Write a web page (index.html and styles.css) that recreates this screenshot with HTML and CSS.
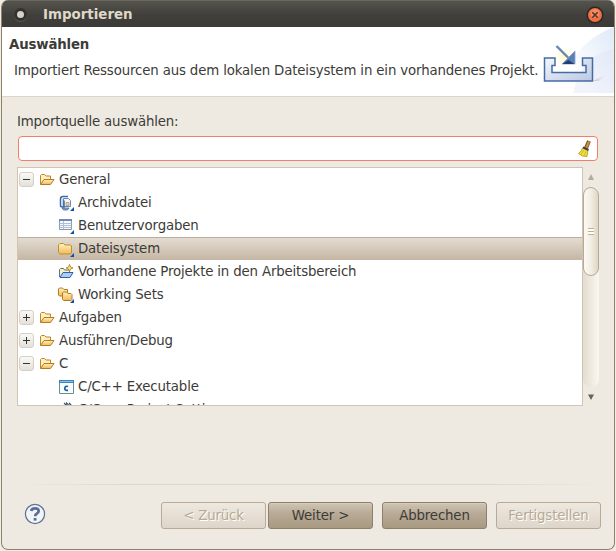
FILE: index.html
```html
<!DOCTYPE html>
<html lang="de">
<head>
<meta charset="utf-8">
<title>Importieren</title>
<link rel="stylesheet" href="styles.css">
</head>
<body>
<svg class="defs" width="0" height="0">
  <defs>
    <linearGradient id="gold" x1="0" y1="0" x2="0" y2="1"><stop offset="0" stop-color="#fff2c0"/><stop offset="1" stop-color="#f0ba58"/></linearGradient>
    <linearGradient id="steel" x1="0" y1="0" x2="1" y2="1"><stop offset="0" stop-color="#f4f7fc"/><stop offset="1" stop-color="#b9c8e2"/></linearGradient>
    <symbol id="folder-open" viewBox="0 0 16 16">
      <path d="M1.500 12V3.500L2.500 2.500H5.500L7 4H11.500V7.500" fill="#fff0bd" stroke="#c08431"/>
      <path d="M1.500 12.500L5 7.500H15L11.500 12.500Z" fill="url(#gold)" stroke="#b87921"/>
    </symbol>
    <symbol id="corner" viewBox="0 0 16 16"><path d="M16 12V16H12Z" fill="#0c539b"/></symbol>
    <symbol id="folder" viewBox="0 0 16 16">
      <path d="M.5 11.500V4L2 2.500H5.500L7 4H12.500L13.500 5V11.500L12.500 13H2Z" fill="url(#gold)" stroke="#c58b2e"/>
      <use href="#corner"/>
    </symbol>
  </defs>
</svg>
<div class="window">
  <header class="titlebar">
    <span class="menu-dot"></span>
    <span class="title">Importieren</span>
    <svg class="close" viewBox="0 0 18 18"><circle cx="9" cy="9" r="8.500" fill="#292825"/><circle cx="9" cy="9" r="7" fill="#ef7044"/><circle cx="9" cy="7.500" r="4.500" fill="#f68a60"/><path d="M6.300 6.300L11.700 11.700M11.700 6.300L6.300 11.700" stroke="#54372c" stroke-width="1.600"/></svg>
  </header>
  <section class="banner">
    <div class="banner-text">
      <h1>Auswählen</h1>
      <p>Importiert Ressourcen aus dem lokalen Dateisystem in ein vorhandenes Projekt.</p>
    </div>
    <svg class="banner-art" viewBox="0 0 75 66">
      <defs><linearGradient id="sky" x1="0" y1="1" x2="1" y2="0"><stop offset=".25" stop-color="#fff"/><stop offset="1" stop-color="#dfe9f8"/></linearGradient>
      <linearGradient id="shade"><stop offset="0" stop-color="#c5bac9"/><stop offset="1" stop-color="#fff" stop-opacity="0"/></linearGradient>
      <radialGradient id="glow"><stop offset="0" stop-color="#fff8bb"/><stop offset="1" stop-color="#fff" stop-opacity="0"/></radialGradient></defs>
      <path d="M25 66Q28 18 75 0V66Z" fill="url(#sky)"/>
      <path d="M34 66Q43 27 75 22V66Z" fill="#dbe4f5" opacity=".4"/>
      <path d="M54 54L72 45L60 54Z" fill="url(#shade)"/>
      <circle cx="25" cy="29" r="13" fill="url(#glow)"/>
      <path d="M5.500 31H16V38.500H13V45.500H47V38.500H43.500V31H53.500V54H5.500Z" fill="url(#steel)" stroke="#456ba7" stroke-width="1.500"/>
      <path d="M17.500 19L29.500 31" stroke="#6686ba" stroke-width="2.400"/>
      <path d="M36 24V37H23Z" fill="#5b7eb7" stroke="#8ba3cc" stroke-width=".8"/><path d="M23.500 37H35.500L29.500 33Z" fill="#223f73"/>
    </svg>
  </section>
  <main class="content">
    <label class="source-label" for="filter">Importquelle auswählen:</label>
    <div class="search">
      <input id="filter" type="text">
      <svg class="broom" viewBox="0 0 16 18"><path d="M12 1L9 8" stroke="#7d501c" stroke-width="4"/><path d="M12 1.500L9.200 8" stroke="#cc8c3d" stroke-width="2.200"/><path d="M5.500 8L11 10L10 16.500Q5 17 1.500 13.500Q4.500 11.500 5.500 8Z" fill="#f2df3c" stroke="#ad941d" stroke-width=".8"/><path d="M6 7.300L11.500 10" stroke="#38444d" stroke-width="2"/><path d="M7 10L4 14.500M9 11L7.500 15.500" stroke="#c8b428" stroke-width=".8"/></svg>
    </div>
    <div class="tree-area">
      <ul class="tree">
        <li class="row"><span class="toggle"></span><svg class="icon"><use href="#folder-open"/></svg>General</li>
        <li class="row child"><svg class="icon" viewBox="0 0 16 16"><path d="M5.500 3.500H10.500L12.500 5.500V11.500H5.500Z" fill="#f5f8fc" stroke="#6a86b3"/><path d="M10 1.500H5Q2.500 1.500 2.500 4V10.500Q2.500 12 4.500 12H6V5.500" fill="none" stroke="#3f68a6" stroke-width="1.500"/><path d="M4.500 3.500V11" stroke="#c5d6ee"/><path d="M8 7.500H11V10.500H8Z" fill="#e8d7a5" stroke="#a9905e" stroke-width=".7"/><path d="M4 13H11L9.500 15H5.500Z" fill="#8ca9d4" stroke="#44699f" stroke-width=".8"/><use href="#corner"/></svg>Archivdatei</li>
        <li class="row child"><svg class="icon" viewBox="0 0 16 16"><path d="M1.500 1.500H13.500V11.500H1.500Z" fill="#f7fafd" stroke="#8995ae"/><path d="M1 1H14V3H1Z" fill="#7189b4"/><path d="M1.500 5.500H13.500M1.500 7.500H13.500M1.500 9.500H13.500M5.500 3V11" stroke="#b1bfd4"/><use href="#corner"/></svg>Benutzervorgaben</li>
        <li class="row child selected"><svg class="icon"><use href="#folder"/></svg>Dateisystem</li>
        <li class="row child"><svg class="icon" viewBox="0 0 16 16"><path d="M1.500 13V5.500L2.500 4.500H5.500L6.500 6H11.500V9" fill="#fff0b7" stroke="#55719e"/><path d="M2 13.500L5 8.500H15L12 13.500Z" fill="#a7d0f0" stroke="#365cb0"/><path d="M11.500 .5L12.500 3L15 4L12.500 5L11.500 7.500L10.500 5L8 4L10.500 3Z" fill="#ffe778" stroke="#a37b22" stroke-width=".8"/></svg>Vorhandene Projekte in den Arbeitsbereich</li>
        <li class="row child"><svg class="icon" viewBox="0 0 16 16"><path d="M.5 8V2L1.500 1H4.500L6 2.500H9.500V9H1.500Z" fill="url(#gold)" stroke="#b97820"/><path d="M4.500 12.500V6L5.500 5H8.500L10 6.500H13L14 7.500V12.500L13 13.500H5.500Z" fill="url(#gold)" stroke="#b97820"/><use href="#corner"/></svg>Working Sets</li>
        <li class="row"><span class="toggle plus"></span><svg class="icon"><use href="#folder-open"/></svg>Aufgaben</li>
        <li class="row"><span class="toggle plus"></span><svg class="icon"><use href="#folder-open"/></svg>Ausführen/Debug</li>
        <li class="row"><span class="toggle"></span><svg class="icon"><use href="#folder-open"/></svg>C</li>
        <li class="row child"><svg class="icon" viewBox="0 0 16 16"><path d="M1.500 1.500H15.500V14.500H1.500Z" fill="#f5fbff" stroke="#6c9085"/><path d="M1 1H16V4H1Z" fill="#3b82b9"/><path d="M2 2.500H15" stroke="#8dc1e4"/><path d="M10 7.500Q7 6.500 6.800 9.200T10 11.300" fill="none" stroke="#205e92" stroke-width="1.700"/></svg>C/C++ Executable</li>
        <li class="row child"><svg class="icon" viewBox="0 0 16 16"><path d="M6 1L10 5M8 .5L12 4.500M11 1L15 5M7 4L9 1.500M11 4L13 2" stroke="#304f78" stroke-width="1.100"/></svg>C/C++ Project Settings</li>
      </ul>
      <div class="scrollbar">
        <svg class="arrow" viewBox="0 0 16 19"><path d="M5 13L8 7L11 13Z" fill="#b7ac9a"/></svg>
        <div class="trough"><div class="thumb"><span class="grip"></span></div></div>
        <svg class="arrow" viewBox="0 0 16 19"><path d="M5 7.500L8 13L11 7.500Z" fill="#666159"/></svg>
      </div>
    </div>
  </main>
  <footer class="footer">
    <svg class="help" viewBox="0 0 22 22"><circle cx="11" cy="11" r="9.600" fill="#f3f4f5" stroke="#5b7096" stroke-width="1.200"/><path d="M7.200 8Q7.500 5.300 11 5.300T14.700 8Q14.700 9.500 12.800 10.600Q11.200 11.500 11.200 13.300" fill="none" stroke="#596d99" stroke-width="2.700"/><path d="M9.700 15H12.500V17.600H9.700Z" fill="#596d99"/></svg>
    <div class="buttons">
      <button class="btn" disabled>&lt; Zurück</button>
      <button class="btn">Weiter &gt;</button>
      <button class="btn cancel">Abbrechen</button>
      <button class="btn finish" disabled>Fertigstellen</button>
    </div>
  </footer>
</div>
</body>
</html>
```
FILE: styles.css
```css
* { box-sizing: border-box; }
body {
  margin: 0;
  padding: 0 1px 1px;
  height: 551px;
  overflow: hidden;
  background: #f3ece4;
  color: #3c3b37;
  font: 13.333px/16px "DejaVu Sans", sans-serif;
  letter-spacing: -0.16px;
}
.defs { position: absolute; }
.window {
  display: flex;
  flex-direction: column;
  height: 550px;
  overflow: hidden;
  border: 1px solid #8d826c;
  border-top: 0;
  border-radius: 7px;
  background: #eeeae2;
}
.titlebar {
  display: flex;
  align-items: center;
  flex: 0 0 27px;
  padding: 1px 10px 0 12px;
  background: linear-gradient(#54534c, #403f3b 55%, #3b3a36);
  border-top: 1px solid #696760;
  color: #dfd8c8;
  letter-spacing: 0;
}
.menu-dot {
  width: 13px;
  height: 13px;
  border: 3px solid #33322f;
  border-radius: 50%;
  background: #d4d1cb;
  box-shadow: 0 1px 0 #5d5b55;
}
.title { flex: 1; margin-left: 16px; font-size: 13.4px; font-weight: bold; }
.close { width: 18px; height: 18px; }
.banner {
  display: flex;
  flex: 0 0 70px;
  background: #fff;
  border-bottom: 1px solid #dfd5c7;
}
.banner-text { flex: 1; min-width: 0; padding: 10px 0 0 7px; white-space: nowrap; }
.banner-text h1 { margin: 0; font-size: 13.333px; line-height: 16px; }
.banner-text p { margin: 10px 0 0 5px; letter-spacing: -0.145px; }
.banner-art { flex: none; width: 75px; height: 66px; }
.content { padding: 17px 14px 0 15px; }
.source-label { display: block; }
.search {
  display: flex;
  align-items: center;
  width: 580px;
  height: 25px;
  margin: 6px 0 6px 1px;
  padding-right: 4px;
  border: 1px solid #f27e69;
  border-radius: 4px;
  background: #fff;
}
.search input {
  flex: 1;
  border: 0;
  outline: 0;
  background: transparent;
  font: inherit;
}
.broom { width: 16px; height: 18px; }
.tree-area { display: flex; height: 239px; }
.tree {
  width: 566px;
  margin: 0;
  padding: 0;
  overflow: hidden;
  list-style: none;
  border: 1px solid #d0c5b2;
  background: #fff;
}
.row {
  display: flex;
  align-items: center;
  height: 23px;
  padding-left: 1px;
  white-space: nowrap;
}
.child { padding-left: 40px; }
.selected {
  background: linear-gradient(#e4dcd1, #c4b6a3);
  border-top: 1px solid #baae9a;
}
.icon { flex: none; width: 16px; height: 16px; margin-right: 4px; }
.toggle {
  display: grid;
  place-items: center;
  width: 15px;
  height: 15px;
  margin-right: 5px;
  border: 1px solid #d5d0c7;
  border-radius: 3px;
  background: linear-gradient(#faf9f7, #e5e0d8);
}
.toggle::before, .toggle::after {
  content: "";
  grid-area: 1 / 1;
  width: 7px;
  height: 1px;
  background: #36342f;
}
.toggle::after { display: none; }
.plus::after { display: block; width: 1px; height: 7px; }
.scrollbar { display: flex; flex-direction: column; width: 16px; }
.arrow { width: 16px; height: 19px; flex: none; }
.trough {
  flex: 1;
  padding-top: 1px;
  border-radius: 8px;
  background: linear-gradient(90deg, #e3dccf, #faf7f0);
}
.thumb {
  display: grid;
  place-items: center;
  height: 89px;
  border: 1px solid #b6aa92;
  border-radius: 8px;
  background: linear-gradient(90deg, #fbf9f5, #f3eee4 48%, #ded5c5);
}
.grip {
  width: 6px;
  height: 7px;
  background: repeating-linear-gradient(#bcb09b 0 1px, #fffdf9 1px 3px);
}
.footer {
  display: flex;
  align-items: center;
  justify-content: space-between;
  height: 61px;
  margin: auto 13px 4px 15px;
  padding: 1px 0 0 7px;
  background: linear-gradient(90deg, transparent, #ded7c7 20%, #ded7c7 80%, transparent) top / 100% 1px no-repeat;
}
.help { width: 22px; height: 22px; margin-bottom: 2px; }
.buttons { display: flex; }
.btn {
  width: 105px;
  height: 27px;
  margin: 0 0 0 2px;
  padding: 1px 0 0;
  border: 1px solid #8d806b;
  border-radius: 3px;
  background: linear-gradient(#d0c4b3, #b8aa96 42%, #a89982);
  color: #3c3b37;
  font: inherit;
  letter-spacing: -0.16px;
  box-shadow: inset 0 1px #d7cdbe;
}
.btn:disabled {
  border-color: #b9aa98;
  background: linear-gradient(#eee8df, #ded5ca);
  color: #b8a993;
  text-shadow: 1px 1px #fff;
  box-shadow: none;
}
.btn.cancel, .btn.finish { margin-left: 9px; }
```
